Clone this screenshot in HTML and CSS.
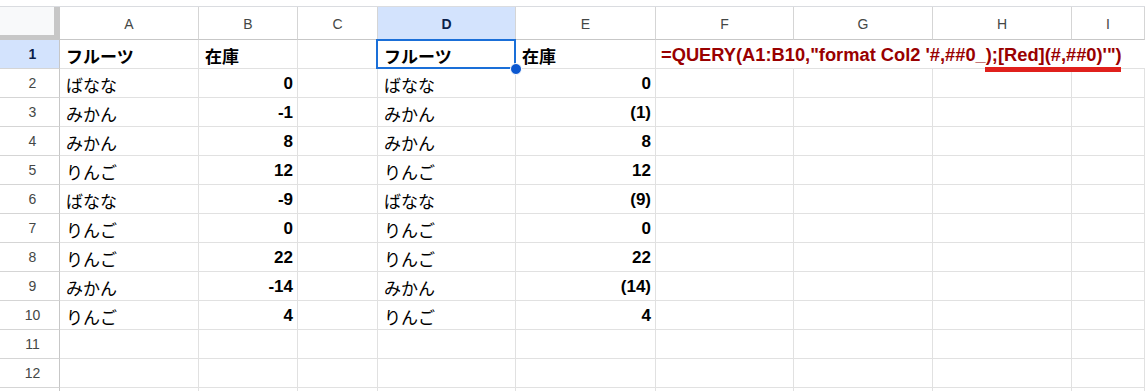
FILE: index.html
```html
<!DOCTYPE html>
<html lang="ja">
<head>
<meta charset="utf-8">
<link rel="stylesheet" href="styles.css">
</head>
<body>
<div class="sheet">
  <div class="row head">
    <div class="corner"></div>
    <div class="ch">A</div><div class="ch">B</div><div class="ch">C</div><div class="ch sel">D</div><div class="ch">E</div><div class="ch">F</div><div class="ch">G</div><div class="ch">H</div><div class="ch">I</div>
  </div>
  <div class="row">
    <div class="rh sel">1</div>
    <div class="c b">フルーツ</div><div class="c b">在庫</div><div class="c"></div>
    <div class="c b active">フルーツ<span class="selbox"></span><span class="handle"></span></div>
    <div class="c b">在庫</div>
    <div class="c formula">=QUERY(A1:B10,"format Col2 '#,##0_);[Red](#,##0)'")<span class="mark"></span></div>
  </div>
  <div class="row"><div class="rh">2</div><div class="c">ばなな</div><div class="c n">0</div><div class="c"></div><div class="c">ばなな</div><div class="c n">0</div><div class="c"></div><div class="c"></div><div class="c"></div><div class="c"></div></div>
  <div class="row"><div class="rh">3</div><div class="c">みかん</div><div class="c n">-1</div><div class="c"></div><div class="c">みかん</div><div class="c n">(1)</div><div class="c"></div><div class="c"></div><div class="c"></div><div class="c"></div></div>
  <div class="row"><div class="rh">4</div><div class="c">みかん</div><div class="c n">8</div><div class="c"></div><div class="c">みかん</div><div class="c n">8</div><div class="c"></div><div class="c"></div><div class="c"></div><div class="c"></div></div>
  <div class="row"><div class="rh">5</div><div class="c">りんご</div><div class="c n">12</div><div class="c"></div><div class="c">りんご</div><div class="c n">12</div><div class="c"></div><div class="c"></div><div class="c"></div><div class="c"></div></div>
  <div class="row"><div class="rh">6</div><div class="c">ばなな</div><div class="c n">-9</div><div class="c"></div><div class="c">ばなな</div><div class="c n">(9)</div><div class="c"></div><div class="c"></div><div class="c"></div><div class="c"></div></div>
  <div class="row"><div class="rh">7</div><div class="c">りんご</div><div class="c n">0</div><div class="c"></div><div class="c">りんご</div><div class="c n">0</div><div class="c"></div><div class="c"></div><div class="c"></div><div class="c"></div></div>
  <div class="row"><div class="rh">8</div><div class="c">りんご</div><div class="c n">22</div><div class="c"></div><div class="c">りんご</div><div class="c n">22</div><div class="c"></div><div class="c"></div><div class="c"></div><div class="c"></div></div>
  <div class="row"><div class="rh">9</div><div class="c">みかん</div><div class="c n">-14</div><div class="c"></div><div class="c">みかん</div><div class="c n">(14)</div><div class="c"></div><div class="c"></div><div class="c"></div><div class="c"></div></div>
  <div class="row"><div class="rh">10</div><div class="c">りんご</div><div class="c n">4</div><div class="c"></div><div class="c">りんご</div><div class="c n">4</div><div class="c"></div><div class="c"></div><div class="c"></div><div class="c"></div></div>
  <div class="row"><div class="rh">11</div><div class="c"></div><div class="c"></div><div class="c"></div><div class="c"></div><div class="c"></div><div class="c"></div><div class="c"></div><div class="c"></div><div class="c"></div></div>
  <div class="row"><div class="rh">12</div><div class="c"></div><div class="c"></div><div class="c"></div><div class="c"></div><div class="c"></div><div class="c"></div><div class="c"></div><div class="c"></div><div class="c"></div></div>
  <div class="row"><div class="rh"></div><div class="c"></div><div class="c"></div><div class="c"></div><div class="c"></div><div class="c"></div><div class="c"></div><div class="c"></div><div class="c"></div><div class="c"></div></div>
</div>
</body>
</html>
```
FILE: styles.css
```css
html, body {
  margin: 0;
  padding: 0;
  background: #ffffff;
  overflow: hidden;
}
body {
  font-family: "Liberation Sans", "Noto Sans CJK JP", sans-serif;
  color: #000;
}
.sheet {
  padding-top: 6px;
  width: 1145px;
}
.row {
  display: grid;
  grid-template-columns: 60px 139px 99px 80px 138px 140px 138px 139px 139px 1fr;
  height: 29px;
}
.row.head {
  height: 34px;
  border-top: 1px solid #dadce0;
  box-sizing: border-box;
}
.corner {
  background: #f8f9fa;
  border-right: 6px solid #c7c7c7;
  border-bottom: 5px solid #c7c7c7;
}
.ch {
  border-right: 1px solid #d5d5d5;
  border-bottom: 1px solid #c7c7c7;
  display: flex;
  align-items: center;
  justify-content: center;
  font-size: 14px;
  color: #444746;
  padding-top: 2px;
}
.ch.sel {
  background: #d3e3fd;
  color: #0b1f4a;
  font-weight: bold;
}
.rh {
  border-right: 1px solid #c7c7c7;
  border-bottom: 1px solid #d5d5d5;
  display: flex;
  align-items: center;
  justify-content: center;
  font-size: 14px;
  color: #444746;
  padding-left: 6px;
}
.rh.sel {
  background: #d3e3fd;
  color: #0b1f4a;
  font-weight: bold;
}
.c {
  position: relative;
  border-right: 1px solid #e1e1e1;
  border-bottom: 1px solid #e1e1e1;
  display: flex;
  align-items: center;
  padding: 2px 4px 0 6px;
  font-size: 17px;
  white-space: nowrap;
  min-width: 0;
}
.c.b { font-weight: bold; }
.c.n {
  justify-content: flex-end;
  font-weight: bold;
}
.c.formula {
  grid-column: span 4;
  font-weight: bold;
  color: #990000;
  padding-left: 5px;
  font-size: 18.3px;
  border-right: none;
}
.selbox {
  position: absolute;
  left: -2px;
  top: -1px;
  right: -1px;
  bottom: -1px;
  border: 2px solid #1a6fd8;
}
.handle {
  position: absolute;
  right: -7px;
  bottom: -7px;
  width: 12px;
  height: 12px;
  border-radius: 50%;
  background: #0b57d0;
  border: 1px solid #fff;
  box-sizing: border-box;
  z-index: 2;
}
.mark {
  position: absolute;
  left: 329px;
  width: 136px;
  top: 27px;
  height: 5px;
  background: #e0201c;
  z-index: 2;
}
```
